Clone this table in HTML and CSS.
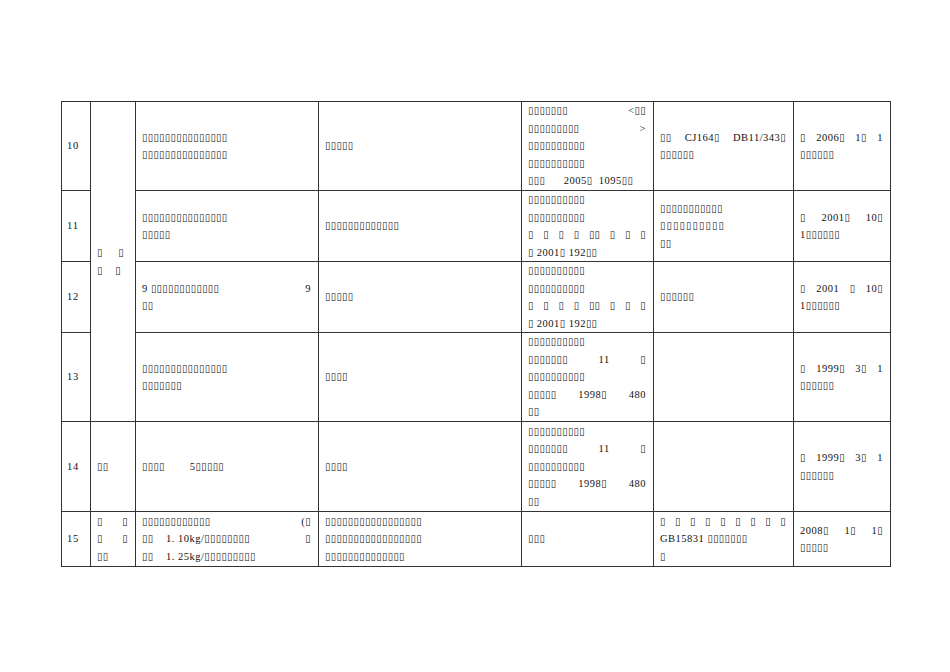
FILE: index.html
```html
<!DOCTYPE html>
<html>
<head>
<meta charset="utf-8">
<link rel="stylesheet" href="styles.css">
</head>
<body>
<table class="sheet">
<colgroup>
<col class="c1"><col class="c2"><col class="c3"><col class="c4"><col class="c5"><col class="c6"><col class="c7">
</colgroup>
<tr class="r89">
<td class="num">10</td>
<td rowspan="4" class="grp"><div>&#x25AF;     &#x25AF;</div><div>&#x25AF;    &#x25AF;</div></td>
<td><div>&#x25AF;&#x25AF;&#x25AF;&#x25AF;&#x25AF;&#x25AF;&#x25AF;&#x25AF;&#x25AF;&#x25AF;&#x25AF;&#x25AF;&#x25AF;&#x25AF;&#x25AF;</div><div>&#x25AF;&#x25AF;&#x25AF;&#x25AF;&#x25AF;&#x25AF;&#x25AF;&#x25AF;&#x25AF;&#x25AF;&#x25AF;&#x25AF;&#x25AF;&#x25AF;&#x25AF;</div></td>
<td><div>&#x25AF;&#x25AF;&#x25AF;&#x25AF;&#x25AF;</div></td>
<td><div class="j">&#x25AF;&#x25AF;&#x25AF;&#x25AF;&#x25AF;&#x25AF;&#x25AF; &lt;&#x25AF;&#x25AF;</div><div class="j">&#x25AF;&#x25AF;&#x25AF;&#x25AF;&#x25AF;&#x25AF;&#x25AF;&#x25AF;&#x25AF; &gt;</div><div>&#x25AF;&#x25AF;&#x25AF;&#x25AF;&#x25AF;&#x25AF;&#x25AF;&#x25AF;&#x25AF;&#x25AF;</div><div>&#x25AF;&#x25AF;&#x25AF;&#x25AF;&#x25AF;&#x25AF;&#x25AF;&#x25AF;&#x25AF;&#x25AF;</div><div>&#x25AF;&#x25AF;&#x25AF;      2005&#x25AF;  1095&#x25AF;&#x25AF;</div></td>
<td><div class="j">&#x25AF;&#x25AF; CJ164&#x25AF; DB11/343&#x25AF;</div><div>&#x25AF;&#x25AF;&#x25AF;&#x25AF;&#x25AF;&#x25AF;</div></td>
<td><div class="j">&#x25AF; 2006&#x25AF; 1&#x25AF; 1</div><div>&#x25AF;&#x25AF;&#x25AF;&#x25AF;&#x25AF;&#x25AF;</div></td>
</tr>
<tr class="r71">
<td class="num">11</td>
<td><div>&#x25AF;&#x25AF;&#x25AF;&#x25AF;&#x25AF;&#x25AF;&#x25AF;&#x25AF;&#x25AF;&#x25AF;&#x25AF;&#x25AF;&#x25AF;&#x25AF;&#x25AF;</div><div>&#x25AF;&#x25AF;&#x25AF;&#x25AF;&#x25AF;</div></td>
<td><div>&#x25AF;&#x25AF;&#x25AF;&#x25AF;&#x25AF;&#x25AF;&#x25AF;&#x25AF;&#x25AF;&#x25AF;&#x25AF;&#x25AF;&#x25AF;</div></td>
<td><div>&#x25AF;&#x25AF;&#x25AF;&#x25AF;&#x25AF;&#x25AF;&#x25AF;&#x25AF;&#x25AF;&#x25AF;</div><div>&#x25AF;&#x25AF;&#x25AF;&#x25AF;&#x25AF;&#x25AF;&#x25AF;&#x25AF;&#x25AF;&#x25AF;</div><div class="j">&#x25AF; &#x25AF; &#x25AF; &#x25AF; &#x25AF;&#x25AF; &#x25AF; &#x25AF; &#x25AF;</div><div>&#x25AF; 2001&#x25AF; 192&#x25AF;&#x25AF;</div></td>
<td><div>&#x25AF;&#x25AF;&#x25AF;&#x25AF;&#x25AF;&#x25AF;&#x25AF;&#x25AF;&#x25AF;&#x25AF;&#x25AF;</div><div class="wide">&#x25AF;&#x25AF;&#x25AF;&#x25AF;&#x25AF;&#x25AF;&#x25AF;&#x25AF;&#x25AF;&#x25AF;</div><div>&#x25AF;&#x25AF;</div></td>
<td><div class="j">&#x25AF; 2001&#x25AF; 10&#x25AF;</div><div>1&#x25AF;&#x25AF;&#x25AF;&#x25AF;&#x25AF;&#x25AF;</div></td>
</tr>
<tr class="r71">
<td class="num">12</td>
<td><div class="split"><span>9 &#x25AF;&#x25AF;&#x25AF;&#x25AF;&#x25AF;&#x25AF;&#x25AF;&#x25AF;&#x25AF;&#x25AF;&#x25AF;&#x25AF;</span><span>9</span></div><div>&#x25AF;&#x25AF;</div></td>
<td><div>&#x25AF;&#x25AF;&#x25AF;&#x25AF;&#x25AF;</div></td>
<td><div>&#x25AF;&#x25AF;&#x25AF;&#x25AF;&#x25AF;&#x25AF;&#x25AF;&#x25AF;&#x25AF;&#x25AF;</div><div>&#x25AF;&#x25AF;&#x25AF;&#x25AF;&#x25AF;&#x25AF;&#x25AF;&#x25AF;&#x25AF;&#x25AF;</div><div class="j">&#x25AF; &#x25AF; &#x25AF; &#x25AF; &#x25AF;&#x25AF; &#x25AF; &#x25AF; &#x25AF;</div><div>&#x25AF; 2001&#x25AF; 192&#x25AF;&#x25AF;</div></td>
<td><div>&#x25AF;&#x25AF;&#x25AF;&#x25AF;&#x25AF;&#x25AF;</div></td>
<td><div class="j">&#x25AF; 2001 &#x25AF; 10&#x25AF;</div><div>1&#x25AF;&#x25AF;&#x25AF;&#x25AF;&#x25AF;&#x25AF;</div></td>
</tr>
<tr class="r89">
<td class="num">13</td>
<td><div>&#x25AF;&#x25AF;&#x25AF;&#x25AF;&#x25AF;&#x25AF;&#x25AF;&#x25AF;&#x25AF;&#x25AF;&#x25AF;&#x25AF;&#x25AF;&#x25AF;&#x25AF;</div><div>&#x25AF;&#x25AF;&#x25AF;&#x25AF;&#x25AF;&#x25AF;&#x25AF;</div></td>
<td><div>&#x25AF;&#x25AF;&#x25AF;&#x25AF;</div></td>
<td><div>&#x25AF;&#x25AF;&#x25AF;&#x25AF;&#x25AF;&#x25AF;&#x25AF;&#x25AF;&#x25AF;&#x25AF;</div><div class="j">&#x25AF;&#x25AF;&#x25AF;&#x25AF;&#x25AF;&#x25AF;&#x25AF; 11 &#x25AF;</div><div>&#x25AF;&#x25AF;&#x25AF;&#x25AF;&#x25AF;&#x25AF;&#x25AF;&#x25AF;&#x25AF;&#x25AF;</div><div class="j">&#x25AF;&#x25AF;&#x25AF;&#x25AF;&#x25AF; 1998&#x25AF; 480</div><div>&#x25AF;&#x25AF;</div></td>
<td></td>
<td><div class="j">&#x25AF; 1999&#x25AF; 3&#x25AF; 1</div><div>&#x25AF;&#x25AF;&#x25AF;&#x25AF;&#x25AF;&#x25AF;</div></td>
</tr>
<tr class="r90">
<td class="num">14</td>
<td><div>&#x25AF;&#x25AF;</div></td>
<td><div>&#x25AF;&#x25AF;&#x25AF;&#x25AF;        5&#x25AF;&#x25AF;&#x25AF;&#x25AF;&#x25AF;</div></td>
<td><div>&#x25AF;&#x25AF;&#x25AF;&#x25AF;</div></td>
<td><div>&#x25AF;&#x25AF;&#x25AF;&#x25AF;&#x25AF;&#x25AF;&#x25AF;&#x25AF;&#x25AF;&#x25AF;</div><div class="j">&#x25AF;&#x25AF;&#x25AF;&#x25AF;&#x25AF;&#x25AF;&#x25AF; 11 &#x25AF;</div><div>&#x25AF;&#x25AF;&#x25AF;&#x25AF;&#x25AF;&#x25AF;&#x25AF;&#x25AF;&#x25AF;&#x25AF;</div><div class="j">&#x25AF;&#x25AF;&#x25AF;&#x25AF;&#x25AF; 1998&#x25AF; 480</div><div>&#x25AF;&#x25AF;</div></td>
<td></td>
<td><div class="j">&#x25AF; 1999&#x25AF; 3&#x25AF; 1</div><div>&#x25AF;&#x25AF;&#x25AF;&#x25AF;&#x25AF;&#x25AF;</div></td>
</tr>
<tr class="r55">
<td class="num">15</td>
<td><div class="j">&#x25AF; &#x25AF;</div><div class="j">&#x25AF; &#x25AF;</div><div>&#x25AF;&#x25AF;</div></td>
<td><div class="j">&#x25AF;&#x25AF;&#x25AF;&#x25AF;&#x25AF;&#x25AF;&#x25AF;&#x25AF;&#x25AF;&#x25AF;&#x25AF;&#x25AF; (&#x25AF;</div><div class="split"><span>&#x25AF;&#x25AF;    1. 10kg/&#x25AF;&#x25AF;&#x25AF;&#x25AF;&#x25AF;&#x25AF;&#x25AF;&#x25AF;</span><span>&#x25AF;</span></div><div>&#x25AF;&#x25AF;    1. 25kg/&#x25AF;&#x25AF;&#x25AF;&#x25AF;&#x25AF;&#x25AF;&#x25AF;&#x25AF;&#x25AF;</div></td>
<td><div>&#x25AF;&#x25AF;&#x25AF;&#x25AF;&#x25AF;&#x25AF;&#x25AF;&#x25AF;&#x25AF;&#x25AF;&#x25AF;&#x25AF;&#x25AF;&#x25AF;&#x25AF;&#x25AF;&#x25AF;</div><div>&#x25AF;&#x25AF;&#x25AF;&#x25AF;&#x25AF;&#x25AF;&#x25AF;&#x25AF;&#x25AF;&#x25AF;&#x25AF;&#x25AF;&#x25AF;&#x25AF;&#x25AF;&#x25AF;&#x25AF;</div><div>&#x25AF;&#x25AF;&#x25AF;&#x25AF;&#x25AF;&#x25AF;&#x25AF;&#x25AF;&#x25AF;&#x25AF;&#x25AF;&#x25AF;&#x25AF;&#x25AF;</div></td>
<td><div>&#x25AF;&#x25AF;&#x25AF;</div></td>
<td><div class="j">&#x25AF; &#x25AF; &#x25AF; &#x25AF; &#x25AF; &#x25AF; &#x25AF; &#x25AF; &#x25AF;</div><div>GB15831 &#x25AF;&#x25AF;&#x25AF;&#x25AF;&#x25AF;&#x25AF;&#x25AF;</div><div>&#x25AF;</div></td>
<td><div class="j">2008&#x25AF; 1&#x25AF; 1&#x25AF;</div><div>&#x25AF;&#x25AF;&#x25AF;&#x25AF;&#x25AF;</div></td>
</tr>
</table>
</body>
</html>
```
FILE: styles.css
```css
html, body {
  margin: 0;
  padding: 0;
  background: #fff;
}
body {
  font-family: "Liberation Serif", "DejaVu Sans Condensed", "DejaVu Sans", serif;
  font-size: 10.5px;
  color: #111;
}
.sheet {
  border-collapse: collapse;
  table-layout: fixed;
  width: 830px;
  margin: 101px 0 0 61px;
}
.c1 { width: 29px; }
.c2 { width: 45px; }
.c3 { width: 183px; }
.c4 { width: 203px; }
.c5 { width: 132px; }
.c6 { width: 140px; }
.c7 { width: 97px; }
.sheet td {
  border: 1px solid #333;
  padding: 0 7px 0 6px;
  vertical-align: middle;
  line-height: 17.5px;
  letter-spacing: 0.5px;
  white-space: pre;
  overflow: hidden;
}
.r89 { height: 89px; }
.r71 { height: 71px; }
.r90 { height: 90px; }
.r55 { height: 55px; }
.sheet td.num {
  padding-left: 5px;
  letter-spacing: 0.8px;
}
.j {
  text-align: justify;
  text-align-last: justify;
  white-space: normal;
}
.split {
  display: flex;
  justify-content: space-between;
}
.wide {
  letter-spacing: 1.3px;
}
```
